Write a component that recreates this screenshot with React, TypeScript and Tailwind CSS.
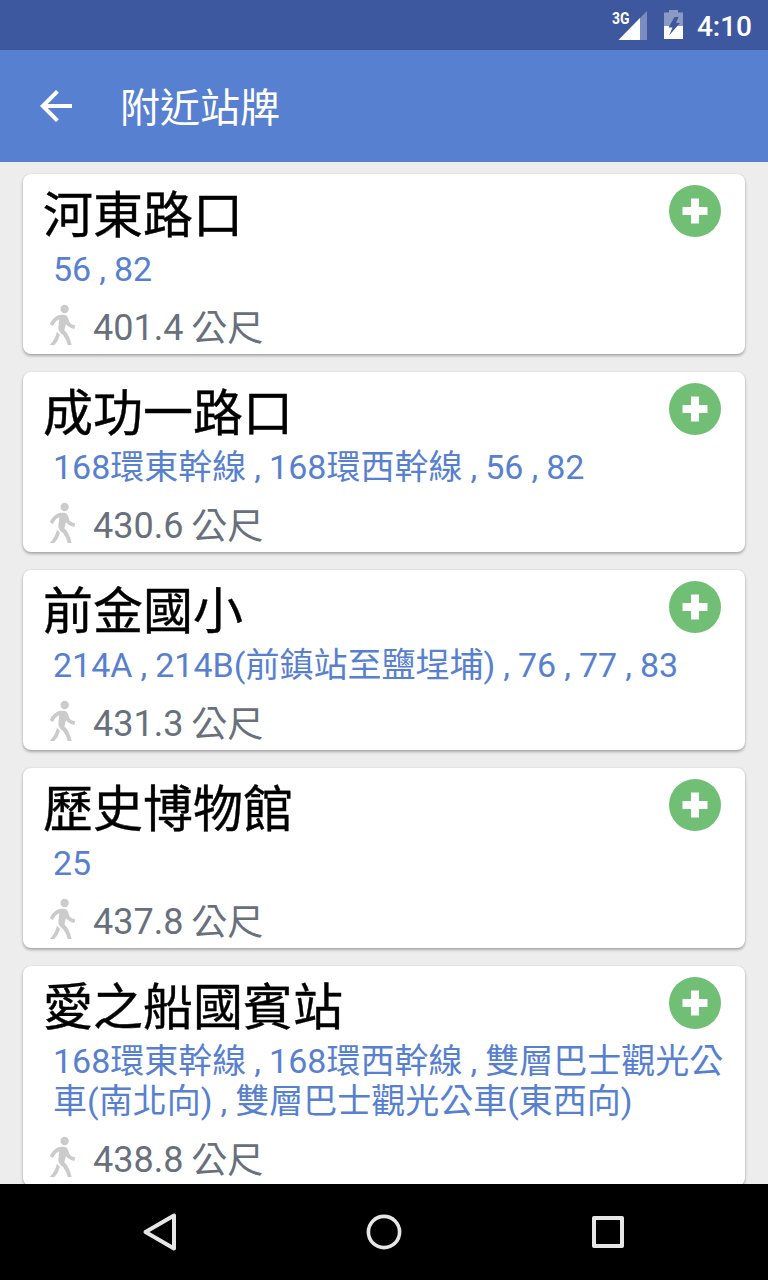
type Stop = {
  name: string;
  routes: string[];
  distance: string;
};

const STOPS: Stop[] = [
  { name: "河東路口", routes: ["56 , 82"], distance: "401.4" },
  { name: "成功一路口", routes: ["168環東幹線 , 168環西幹線 , 56 , 82"], distance: "430.6" },
  { name: "前金國小", routes: ["214A , 214B(前鎮站至鹽埕埔) , 76 , 77 , 83"], distance: "431.3" },
  { name: "歷史博物館", routes: ["25"], distance: "437.8" },
  {
    name: "愛之船國賓站",
    routes: ["168環東幹線 , 168環西幹線 , 雙層巴士觀光公", "車(南北向) , 雙層巴士觀光公車(東西向)"],
    distance: "438.8",
  },
];

function StatusBar() {
  return (
    <div className="flex h-[50px] shrink-0 items-center justify-end bg-[#3d589f] pr-4 text-white">
      <svg className="h-[50px] w-[48px]" viewBox="606 0 48 50">
        <text x="612" y="23.5" fill="#fff" fontSize="16" fontWeight="700" textLength="17.5" lengthAdjust="spacingAndGlyphs">
          3G
        </text>
        <path d="M647 11V40H618.5Z" fill="#fff" fillOpacity=".32" />
        <path d="M640 18V40H618.5Z" fill="#fff" />
      </svg>
      <svg className="ml-[6px] h-[50px] w-[30px]" viewBox="660 0 30 50">
        <path d="M664 12.5H669V10H678V12.5H683V26H664Z" fill="#fff" fillOpacity=".4" />
        <path d="M664 26H683V39H664Z" fill="#fff" />
        <path d="M674.5 17L668.5 27.5H672.5L669 35.5L680 23H676L678.5 17Z" fill="#3d589f" />
      </svg>
      <span className="mt-[3px] ml-[7px] text-[28px] font-medium leading-none">4:10</span>
    </div>
  );
}

function AppBar() {
  return (
    <header className="flex h-28 shrink-0 items-center bg-[#5880d0] pl-8 text-white">
      <svg className="size-12" viewBox="0 0 24 24" fill="currentColor">
        <path d="M20 11H7.83l5.59-5.59L12 4l-8 8 8 8 1.41-1.41L7.83 13H20v-2z" />
      </svg>
      <h1 className="mt-[5px] ml-10 text-[40px] leading-none">附近站牌</h1>
    </header>
  );
}

function WalkIcon() {
  return (
    <svg className="mb-[6px] h-[42px] w-7" viewBox="58 27 84 126" fill="#cbcbcb">
      <circle cx="105" cy="42" r="12.5" />
      <path d="M60 88Q72 62 92 59H104Q112 60 115 68L120 83Q126 89 137 91L134 102Q116 98 109 88L104 106Q118 118 126 150H114Q110 132 100 120Q86 110 86 98L89 73Q76 78 70 93Z" />
      <path d="M82 110L91 120Q86 138 74 150H60Q76 134 82 110Z" />
    </svg>
  );
}

function StopCard({ stop }: { stop: Stop }) {
  return (
    <article className="shrink-0 rounded-lg bg-white pt-[9px] pb-[6px] pl-5 pr-6 shadow-[0_2px_3px_rgba(0,0,0,0.28),0_0_2px_rgba(0,0,0,0.12)]">
      <div className="flex h-[60px] items-start justify-between">
        <h2 className="pt-[3px] text-[50px] leading-[60px] text-black [-webkit-text-stroke:0.4px_black]">{stop.name}</h2>
        <svg className="mt-[2px] size-[52px]" viewBox="0 0 52 52">
          <circle cx="26" cy="26" r="26" fill="#71bf74" />
          <path d="M22 13.5H30V22H38.5V30H30V38.5H22V30H13.5V22H22Z" fill="#fff" />
        </svg>
      </div>
      <div className="mt-[6px] pl-[10px] text-[34px] leading-10 whitespace-nowrap text-[#5880d0] [word-spacing:-0.4px]">
        {stop.routes.map((line) => (
          <p key={line}>{line}</p>
        ))}
      </div>
      <div className="mt-[19px] flex h-10 items-center pl-[6px] text-[36px] leading-10 text-[#67707c]">
        <WalkIcon />
        <span className="ml-4 [word-spacing:-1px]">
          {stop.distance} <span className="inline-block translate-y-px">公尺</span>
        </span>
      </div>
    </article>
  );
}

function NavBar() {
  return (
    <nav className="flex h-24 shrink-0 items-center justify-center gap-44 bg-black">
      <svg className="size-12" viewBox="0 0 48 48" fill="none" stroke="#e6e6e6" strokeWidth="4" strokeLinejoin="round">
        <path d="M38 7.5V40.5L9.5 24Z" />
      </svg>
      <svg className="size-12" viewBox="0 0 48 48" fill="none" stroke="#e6e6e6" strokeWidth="3.6">
        <circle cx="24" cy="24" r="15.6" />
      </svg>
      <svg className="size-12" viewBox="0 0 48 48" fill="none" stroke="#e6e6e6" strokeWidth="4" strokeLinejoin="round">
        <path d="M10 10H38V38H10Z" />
      </svg>
    </nav>
  );
}

export default function App() {
  return (
    <div className="flex h-[1280px] w-[768px] flex-col overflow-hidden bg-[#ededed] font-[Roboto,'Noto_Sans_CJK_TC',sans-serif]">
      <StatusBar />
      <AppBar />
      <main className="flex min-h-0 flex-1 flex-col gap-[18px] overflow-hidden px-[23px] pt-3">
        {STOPS.map((stop) => (
          <StopCard key={stop.name} stop={stop} />
        ))}
      </main>
      <NavBar />
    </div>
  );
}
